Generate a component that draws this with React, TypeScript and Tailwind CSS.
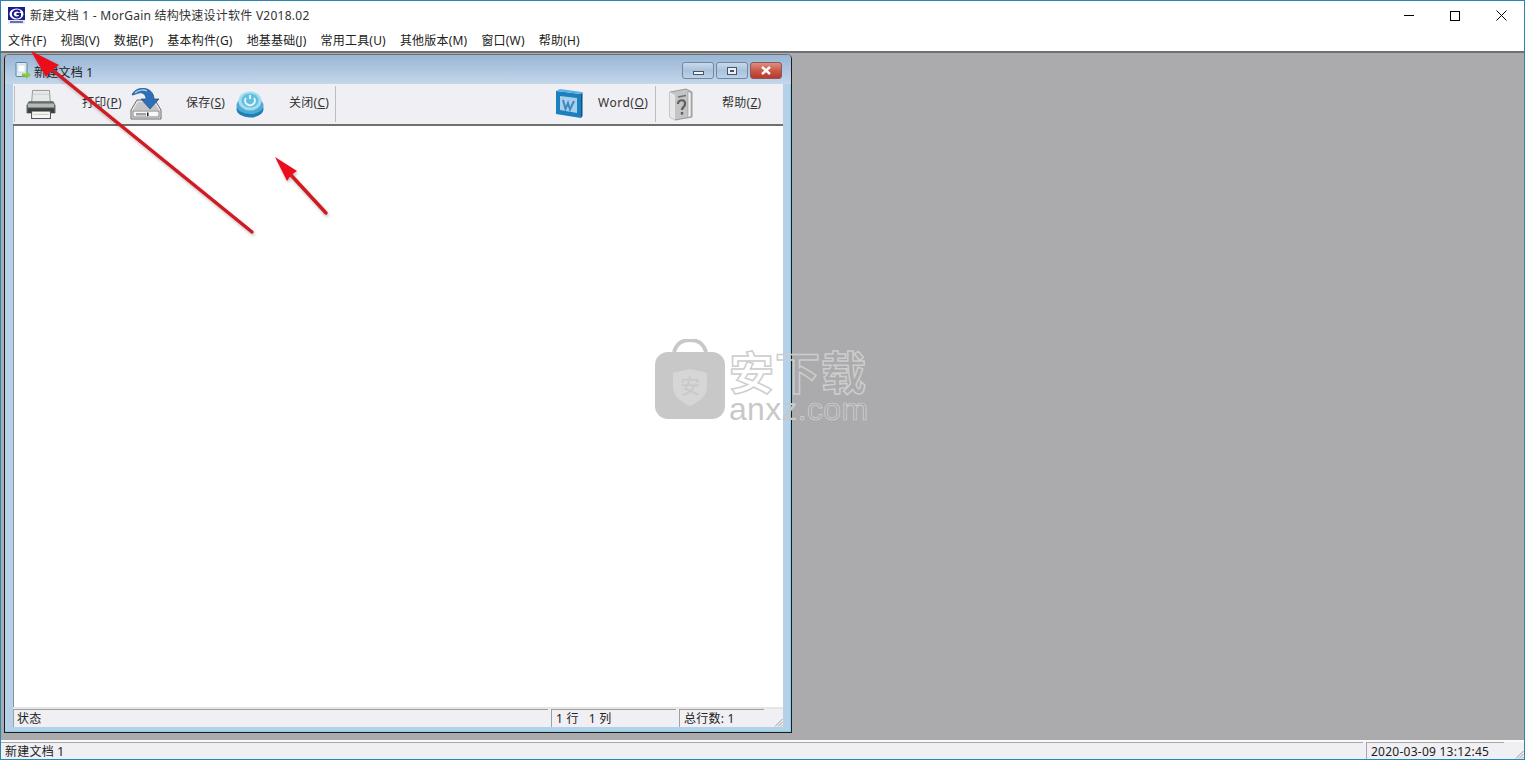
import React from 'react';

const menus = ['文件(F)', '视图(V)', '数据(P)', '基本构件(G)', '地基基础(J)', '常用工具(U)', '其他版本(M)', '窗口(W)', '帮助(H)'];

const AppLogo = () => (
  <svg width="17" height="17" viewBox="0 0 17 17">
    <rect width="17" height="17" fill="#1a1f8c" />
    <rect y="13" width="17" height="4" fill="#e8e8f4" />
    <ellipse cx="8.5" cy="7" rx="7" ry="5.5" fill="#fff" />
    <path d="M12 5 A4 3.4 0 1 0 12 9 L12 7 L8.5 7" fill="none" stroke="#1a1f8c" strokeWidth="2" />
    <rect x="2" y="14.4" width="13" height="1.2" fill="#1a1f8c" />
  </svg>
);

const DocIcon = () => (
  <svg width="16" height="17" viewBox="0 0 16 17">
    <rect x="1" y="0.5" width="11" height="14" rx="1" fill="#dfeaf2" stroke="#4d87a8" />
    <rect x="3" y="3" width="7" height="7" fill="#fff" stroke="#a8c6d8" strokeWidth="0.5" />
    <path d="M7 11.500h4V9l5 4-5 4v-2.500H7z" fill="#8cc63f" />
  </svg>
);

const PrinterIcon = () => (
  <svg width="30" height="31" viewBox="0 0 32 32">
    <path d="M7 1h18l1 13H6z" fill="#e6e9e7" stroke="#8f9592" />
    <path d="M7 5h18" stroke="#c9cdcb" />
    <path d="M3 13h26l2 4v8H1v-8z" fill="#6a7170" stroke="#3f4443" strokeWidth="0.7" />
    <rect x="2" y="15" width="28" height="4" fill="#b4bab8" />
    <rect x="2" y="20" width="28" height="5" fill="#3b403f" />
    <rect x="6" y="23" width="20" height="8" fill="#f6f7f5" stroke="#3f4443" />
    <rect x="8" y="26" width="16" height="1" fill="#c2c6c4" />
  </svg>
);

const SaveIcon = () => (
  <svg width="32" height="32" viewBox="0 0 32 32">
    <path d="M7 12h18l6 10v9H1v-9z" fill="#e9e9e9" stroke="#6b6b6b" />
    <path d="M8 14h16l5 8H3z" fill="#c6c6c6" />
    <rect x="3" y="23" width="26" height="6" fill="#f7f7f7" stroke="#555" strokeWidth="0.7" />
    <rect x="6" y="25" width="10" height="2.500" fill="#a2a2a2" />
    <rect x="17" y="24.500" width="1.500" height="3.500" fill="#222" />
    <path d="M2 7C4 1 12-1 17 1s7 6 7 10h5l-9 10-9-10h5c0-4-3-7-7-6-3 .5-5 2-7 2z" fill="#2f6fb7" stroke="#174d8c" strokeWidth="0.7" />
    <path d="M5 5c3-3 9-4 12-2" fill="none" stroke="#a3cdf0" strokeWidth="1.500" />
  </svg>
);

const PowerIcon = () => (
  <svg width="28" height="28" viewBox="0 0 28 28">
    <ellipse cx="14" cy="19" rx="13.500" ry="8.500" fill="#1f7fb5" />
    <ellipse cx="14" cy="15.500" rx="13.500" ry="8.500" fill="#4faad6" />
    <ellipse cx="14" cy="11" rx="11.500" ry="9.500" fill="#a2dcef" />
    <ellipse cx="14" cy="10.500" rx="8.500" ry="7" fill="#63bfe2" />
    <path d="M10 8a5 4.500 0 1 0 8 0" fill="none" stroke="#e6f7fc" strokeWidth="1.800" />
    <path d="M14 5v4" stroke="#e6f7fc" strokeWidth="1.800" />
  </svg>
);

const WordIcon = () => (
  <svg width="28" height="30" viewBox="0 0 28 30">
    <path d="M1 2l25 3v24L1 25z" fill="#1c7fc0" />
    <path d="M1 2l4-2 22 3-1 2z" fill="#5ab0e2" />
    <path d="M26 5l1.500-2v24L26 29z" fill="#0c4f86" />
    <path d="M5 7l17 2v15L5 21z" fill="#a8d0ea" />
    <path d="M8 11l2.500 9 2.500-6 2 6.500L19 12" fill="none" stroke="#3c8ac0" strokeWidth="2" />
  </svg>
);

const HelpBookIcon = () => (
  <svg width="24" height="33" viewBox="0 0 24 33">
    <path d="M1 4L17 1l6 3v25L6 32l-5-3z" fill="#c4c4c4" stroke="#7d7d7d" strokeWidth="0.7" />
    <path d="M1 4l5 3v25l-5-3z" fill="#e6e6e6" />
    <path d="M19 3.500l3 1v24l-3 1z" fill="#f1f1f1" stroke="#888" strokeWidth="0.5" />
    <path d="M9 9l8-1.500" stroke="#6f6f6f" strokeWidth="1.500" />
    <path d="M9 16c0-5 8-5 7 0 0 3-3 3-3 6" fill="none" stroke="#5f5f5f" strokeWidth="2.200" />
    <rect x="11.800" y="24" width="2.400" height="2.600" fill="#5f5f5f" />
  </svg>
);

const ToolLabel = ({ text, hot, className }: { text: string; hot: string; className: string }) => (
  <span className={`-mt-[2px] text-[12px] leading-none text-[#333] whitespace-nowrap ${className}`}>
    {text}(<u>{hot}</u>)
  </span>
);

const Grip = () => (
  <svg width="9" height="9" viewBox="0 0 9 9" className="absolute right-0 bottom-0">
    <path d="M8.500 1L1 8.500M8.500 4L4 8.500M8.500 7L7 8.500" stroke="#9a9a9a" strokeWidth="1" />
  </svg>
);

const CaptionButton = ({ kind }: { kind: 'min' | 'max' | 'close' }) => {
  if (kind === 'close') {
    return (
      <div className="w-[32px] h-[17px] rounded-[3px] border border-[#8a5a58] bg-gradient-to-b from-[#dc8f80] via-[#c9584a] to-[#b8382c] flex items-center justify-center">
        <svg width="12" height="9" viewBox="0 0 12 9">
          <path d="M2 1l8 7M10 1L2 8" stroke="#fff" strokeWidth="2.400" />
        </svg>
      </div>
    );
  }
  return (
    <div className="w-[32px] h-[17px] rounded-[3px] border border-[#6f87a3] bg-gradient-to-b from-[#c9d9ea] via-[#a9c2dc] to-[#bcd2e6] flex items-center justify-center">
      {kind === 'min' ? (
        <div className="w-[11px] h-[4px] mt-[4px] bg-[#f3f6f9] border border-[#44546a]" />
      ) : (
        <div className="w-[10px] h-[8px] bg-[#e9eff5] border border-[#44546a] flex items-center justify-center">
          <div className="w-[4px] h-[2px] bg-[#44546a]" />
        </div>
      )}
    </div>
  );
};

const ChildWindow = () => (
  <div className="w-[788px] h-[679px] shrink-0 flex flex-col border border-[#1c1c1c] border-t-[#707070] rounded-t-[5px] bg-[#b5d1ea] shadow-[inset_-1px_-1px_0_#7fd4ea]">
    {/* Caption */}
    <div className="h-[29px] shrink-0 flex items-center pl-[10px] pr-[9px] pt-[2px] rounded-t-[4px] bg-gradient-to-b from-[#98b6d6] to-[#c4d7ea]">
      <DocIcon />
      <span className="ml-[3px] mt-[4px] text-[12px] text-[#222]">新建文档 1</span>
      <div className="ml-auto flex items-center gap-[2px]">
        <CaptionButton kind="min" />
        <CaptionButton kind="max" />
        <CaptionButton kind="close" />
      </div>
    </div>

    <div className="flex-1 min-h-0 mx-[8px] flex flex-col">
      {/* Toolbar */}
      <div className="h-[42px] shrink-0 flex items-center bg-[#f0eff3] border-b-2 border-[#6f6f6f]">
        <div className="w-px h-[36px] ml-px bg-[#bdbdbd]" />
        <div className="ml-[11px] w-[32px] flex"><PrinterIcon /></div>
        <ToolLabel text="打印" hot="P" className="ml-[24px] w-[40px]" />
        <div className="ml-[8px] w-[32px] flex"><SaveIcon /></div>
        <ToolLabel text="保存" hot="S" className="ml-[24px] w-[40px]" />
        <div className="ml-[10px] w-[28px] flex"><PowerIcon /></div>
        <ToolLabel text="关闭" hot="C" className="ml-[25px] w-[40px]" />
        <div className="ml-[6px] w-px h-[36px] bg-[#bdbdbd]" />
        <div className="ml-[219px] w-[28px] flex"><WordIcon /></div>
        <ToolLabel text="Word" hot="O" className="ml-[15px] w-[52px] tracking-[0.5px]" />
        <div className="ml-[5px] w-px h-[36px] bg-[#bdbdbd]" />
        <div className="ml-[13px] w-[24px] flex"><HelpBookIcon /></div>
        <ToolLabel text="帮助" hot="Z" className="ml-[29px] w-[40px]" />
      </div>

      {/* Editor */}
      <div className="flex-1 min-h-0 bg-white border-l border-[#8f8f8f]" />

      {/* Status bar */}
      <div className="relative h-[20px] shrink-0 flex gap-[3px] bg-[#f0eff3] border-t-2 border-[#e6e6e6] text-[12px] leading-[18px] text-[#222]">
        <div className="w-[535px] border-t border-l border-[#a0a0a0] pl-[3px]">状态</div>
        <div className="w-[125px] border-t border-l border-[#a0a0a0] pl-[4px] whitespace-pre">1 行   1 列</div>
        <div className="w-[85px] border-t border-l border-[#a0a0a0] pl-[4px]">总行数: 1</div>
        <Grip />
      </div>
    </div>
    <div className="h-[5px] shrink-0" />
  </div>
);

const Watermark = () => (
  <div className="absolute left-[654px] top-[338px] flex items-start pointer-events-none select-none">
    <svg width="70" height="80" viewBox="0 0 70 80">
      <path d="M19 13C22 3 28 1 35 1s13 2 16 12" fill="none" stroke="#c8c8c8" strokeWidth="4" />
      <rect x="0" y="13" width="70" height="67" rx="13" fill="#c8c8c8" />
      <path d="M35 30l17 4v14c0 9-8 15-17 19-9-4-17-10-17-19V34z" fill="#d6d6d6" />
      <text x="35" y="55" textAnchor="middle" fontSize="20" fill="#c8c8c8">安</text>
    </svg>
    <div className="ml-[4px] mt-[11px] flex flex-col items-start">
      <span className="text-[45px] leading-[46px] font-bold tracking-[1px] text-transparent [-webkit-text-stroke:1.5px_#cdcdcd]">安下载</span>
      <span className="font-['Liberation_Sans',sans-serif] text-[32px] leading-[26px] tracking-[0.3px] text-[#c8c8c8]">
        anxz<span className="text-transparent [-webkit-text-stroke:0.7px_#d4d4d4]">.com</span>
      </span>
    </div>
  </div>
);

const Arrows = () => (
  <svg className="absolute left-0 top-0 pointer-events-none" width="360" height="240" viewBox="0 0 360 240">
    <defs>
      <filter id="arrowShadow" x="-20%" y="-20%" width="140%" height="140%">
        <feDropShadow dx="1" dy="2" stdDeviation="1.500" floodColor="#000" floodOpacity="0.25" />
      </filter>
    </defs>
    <g filter="url(#arrowShadow)">
      <path d="M251 231L49 67" stroke="#cf1a22" strokeWidth="3.500" strokeLinecap="round" />
      <path d="M30 50L58 64L51 69L45 76Z" fill="#ec0f1a" />
      <path d="M325 212L289 173" stroke="#cf1a22" strokeWidth="3.500" strokeLinecap="round" />
      <path d="M274 156L296 170L290 174L286 180Z" fill="#ec0f1a" />
    </g>
  </svg>
);

export default function App() {
  return (
    <div className="relative w-[1525px] h-[760px] overflow-hidden flex flex-col bg-white border border-[#2a86b0] tracking-[0.25px] font-['Noto_Sans','Noto_Sans_CJK_SC',sans-serif]">
      {/* Title bar */}
      <div className="h-[29px] shrink-0 flex items-center pl-[7px]">
        <AppLogo />
        <span className="ml-[5px] text-[12px] text-[#333]">新建文档 1 - MorGain 结构快速设计软件 V2018.02</span>
        <div className="ml-auto flex items-center">
          <div className="w-[46px] flex justify-center">
            <div className="w-[10px] h-px bg-black" />
          </div>
          <div className="w-[46px] flex justify-center">
            <div className="w-[10px] h-[10px] border border-black" />
          </div>
          <div className="w-[46px] flex justify-center">
            <svg width="11" height="11" viewBox="0 0 11 11">
              <path d="M.5.5l10 10M10.500.5l-10 10" stroke="#000" />
            </svg>
          </div>
        </div>
      </div>

      {/* Menu bar */}
      <div className="h-[21px] shrink-0 flex items-center gap-[14px] pl-[7px] text-[12px] tracking-[0.2px] text-[#222]">
        {menus.map(m => (
          <span key={m}>{m}</span>
        ))}
      </div>

      {/* MDI area */}
      <div className="flex-1 min-h-0 bg-[#abaaac] border-t-2 border-[#6f6f6f] pl-[3px] pt-[1px]">
        <ChildWindow />
      </div>

      {/* Main status bar */}
      <div className="relative h-[19px] shrink-0 flex bg-[#f0eff3] border-t-2 border-[#fafafa] text-[12px] leading-[18px] text-[#222]">
        <div className="w-[1362px] border-t border-[#a8a8a8] pl-[4px]">新建文档 1</div>
        <div className="ml-[3px] w-[138px] border-t border-l border-[#a8a8a8] pl-[4px]">2020-03-09 13:12:45</div>
        <Grip />
      </div>

      <Watermark />
      <Arrows />
    </div>
  );
}
